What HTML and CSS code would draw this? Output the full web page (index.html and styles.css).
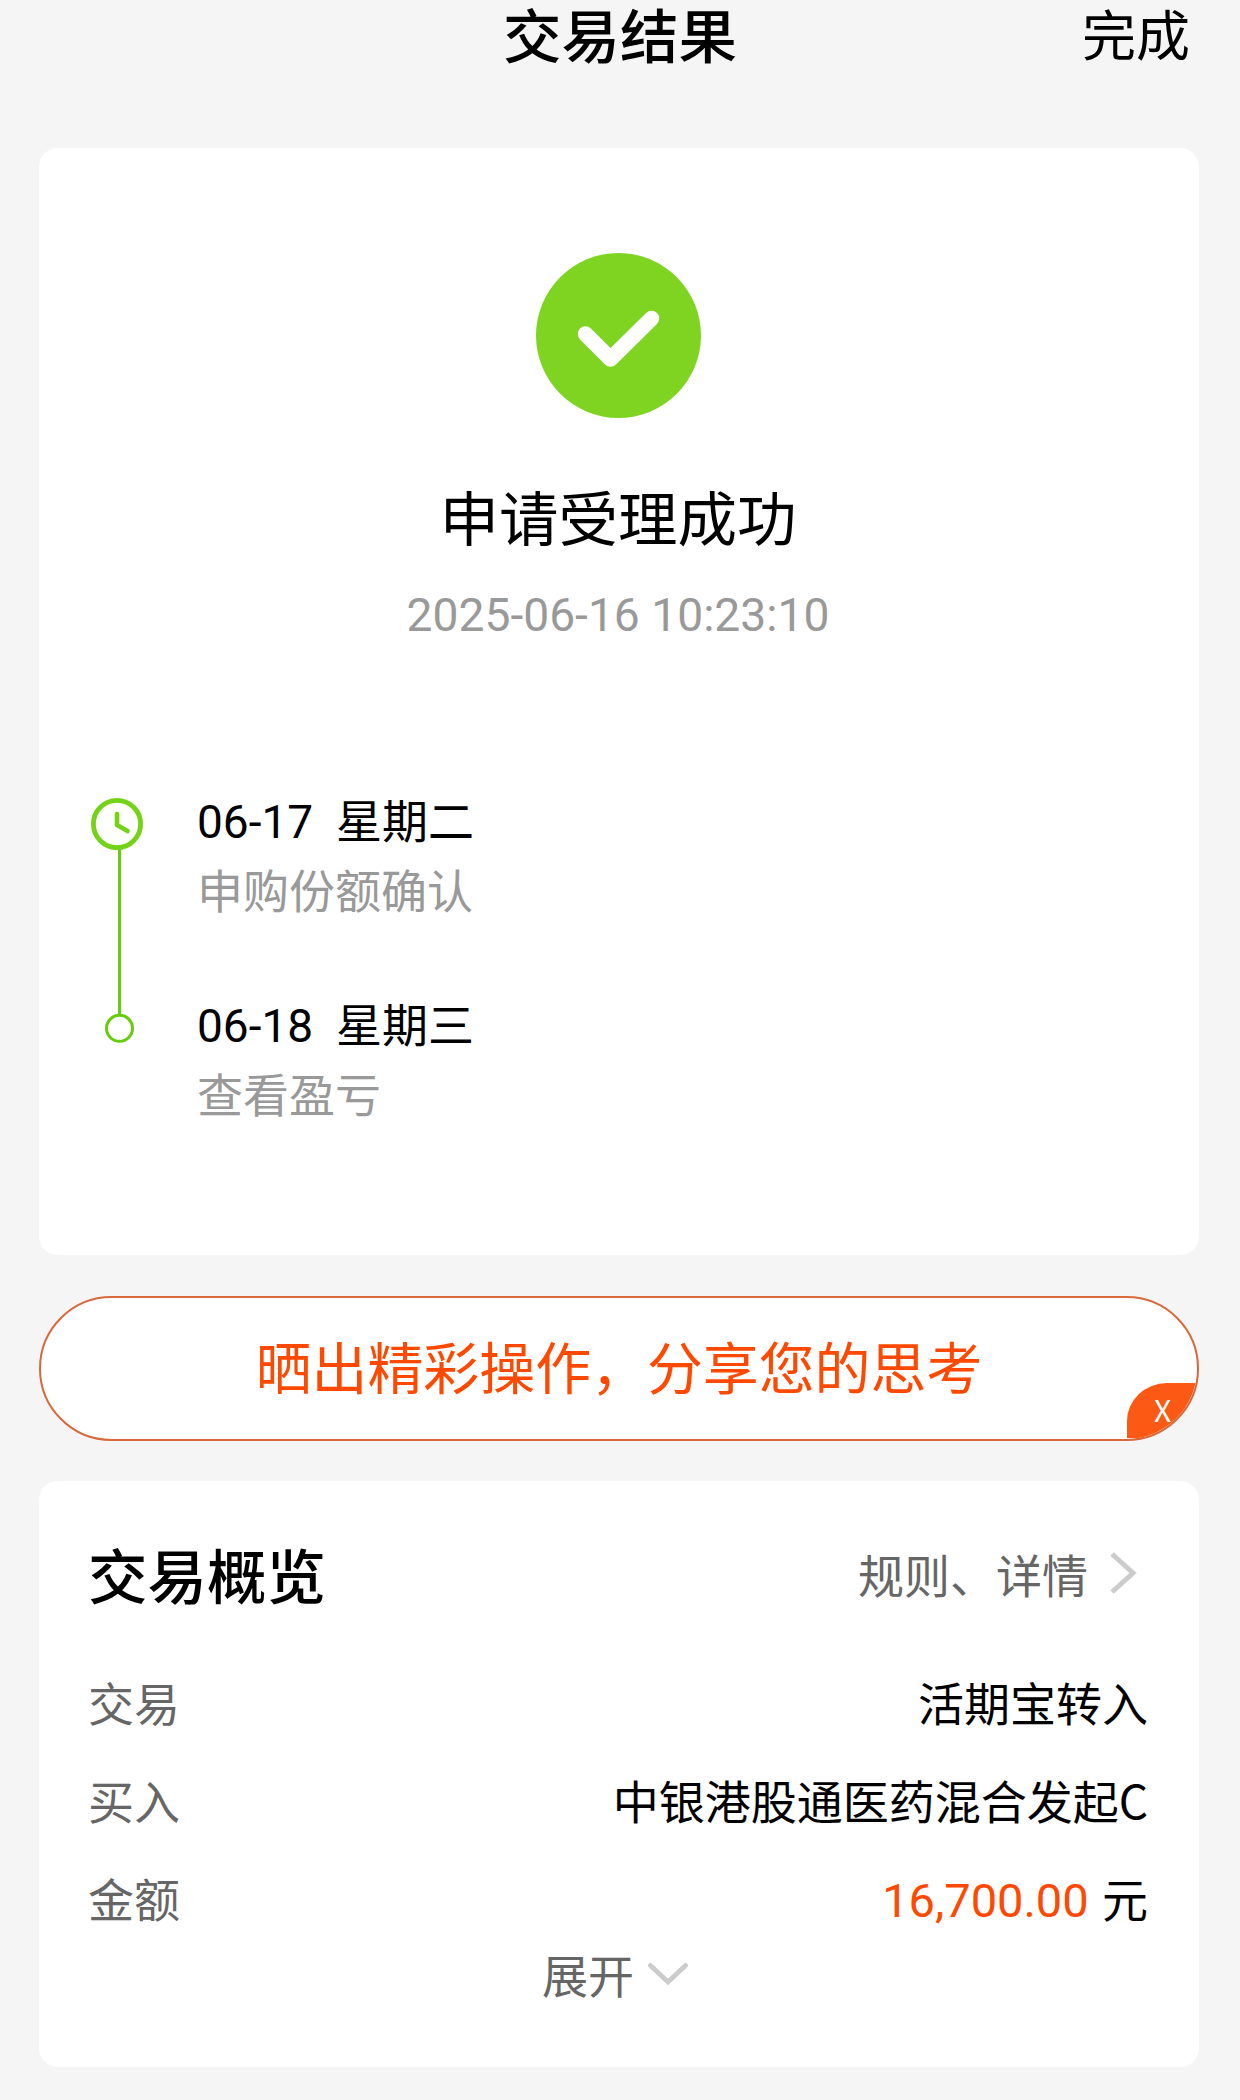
FILE: index.html
```html
<!DOCTYPE html>
<html lang="zh-CN">
<head>
    <meta charset="UTF-8">
    <title>交易结果</title>
    <link rel="stylesheet" href="styles.css">
</head>
<body>
    <div class="header">
        <h1>交易结果</h1>
        <a class="done">完成</a>
    </div>

    <div class="card result">
        <svg class="success-icon" viewBox="0 0 165 165">
            <circle cx="82.5" cy="82.5" r="82.5" fill="#7ed421"/>
            <path d="M49.5 81 L74.5 106 L115.5 65.5" fill="none" stroke="#fff" stroke-width="15.5" stroke-linecap="round" stroke-linejoin="round"/>
        </svg>
        <h2>申请受理成功</h2>
        <p class="time">2025-06-16 10:23:10</p>

        <div class="timeline">
            <svg class="track" viewBox="0 0 56 250">
                <path d="M30.5 52 V218" stroke="#66cc0d" stroke-width="3"/>
                <circle cx="28" cy="27" r="23.6" fill="#fff" stroke="#74d316" stroke-width="4.8"/>
                <path d="M28 17 V28 L38.5 34" fill="none" stroke="#74d316" stroke-width="4.6" stroke-linecap="round" stroke-linejoin="round"/>
                <circle cx="30.5" cy="231.3" r="13" fill="#fff" stroke="#66cc0d" stroke-width="3"/>
            </svg>
            <div class="steps">
                <div class="step">
                    <div class="date">06-17&nbsp; 星期二</div>
                    <div class="desc">申购份额确认</div>
                </div>
                <div class="step">
                    <div class="date">06-18&nbsp; 星期三</div>
                    <div class="desc">查看盈亏</div>
                </div>
            </div>
        </div>
    </div>

    <div class="share">
        <span>晒出精彩操作，分享您的思考</span>
        <div class="close">X</div>
    </div>

    <div class="card overview">
        <div class="overview-head">
            <h3>交易概览</h3>
            <a class="rules">规则、详情
                <svg class="arrow-right" viewBox="0 0 28 44">
                    <path d="M3 3 L24 22 L3 41" fill="none" stroke="#ccc" stroke-width="5"/>
                </svg>
            </a>
        </div>
        <div class="row">
            <span class="label">交易</span>
            <span class="value">活期宝转入</span>
        </div>
        <div class="row">
            <span class="label">买入</span>
            <span class="value">中银港股通医药混合发起C</span>
        </div>
        <div class="row">
            <span class="label">金额</span>
            <span class="value"><b class="amount">16,700.00</b> 元</span>
        </div>
        <div class="expand">展开
            <svg class="arrow-down" viewBox="0 0 40 24">
                <path d="M2.5 2.5 L20 19 L37.5 2.5" fill="none" stroke="#ccc" stroke-width="4.8" stroke-linecap="round"/>
            </svg>
        </div>
    </div>
</body>
</html>
```
FILE: styles.css
```css
* {
    box-sizing: border-box;
}

body {
    margin: 0;
    background: #f5f5f5;
    color: #000;
    font-family: Roboto, "Noto Sans CJK SC", sans-serif;
    font-size: 46px;
}

h1, h2, h3, p {
    margin: 0;
}

svg {
    display: block;
}

.header {
    display: grid;
    grid-template-columns: 1fr auto 1fr;
    align-items: center;
    height: 76px;
    padding: 0 50px;
    margin-bottom: 72px;
}

.header h1 {
    grid-column: 2;
    font-size: 58.5px;
    font-weight: 500;
    line-height: 76px;
}

.done {
    justify-self: end;
    font-size: 54px;
    line-height: 76px;
}

.card {
    margin: 0 41px 0 39px;
    background: #fff;
    border-radius: 19px;
}

.result {
    height: 1107px;
    padding: 105px 52px 0 50px;
}

.success-icon {
    width: 165px;
    height: 165px;
    margin: 0 auto;
}

.result h2 {
    margin-top: 67px;
    font-size: 59.5px;
    font-weight: 400;
    line-height: 72px;
    text-align: center;
}

.time {
    margin-top: 28px;
    color: #999;
    font-size: 46.2px;
    line-height: 60px;
    text-align: center;
}

.timeline {
    display: flex;
    margin-top: 142px;
}

.track {
    width: 56px;
    height: 250px;
    margin-top: 10px;
    flex: none;
}

.steps {
    margin-left: 52px;
}

.step {
    height: 204px;
    line-height: 70px;
}

.desc {
    color: #999;
}

.share {
    position: relative;
    display: flex;
    align-items: center;
    justify-content: center;
    height: 145px;
    margin: 41px 41px 40px 39px;
    padding-bottom: 8px;
    background: #fff;
    border: 2px solid #d9683a;
    border-radius: 73px;
    overflow: hidden;
    color: #ff4800;
    font-size: 55.9px;
}

.close {
    position: absolute;
    right: 0;
    bottom: 1px;
    width: 70px;
    height: 55px;
    padding-left: 27px;
    background: #fc5a14;
    border-top-left-radius: 40px 38px;
    color: #fff;
    font-family: "Noto Sans CJK SC", sans-serif;
    font-size: 30px;
    line-height: 53px;
}

.overview {
    height: 586px;
    padding: 50px 51px 0 49px;
}

.overview-head {
    display: flex;
    justify-content: space-between;
    align-items: center;
    height: 84px;
    margin-bottom: 37px;
}

.overview-head h3 {
    font-size: 59.5px;
    font-weight: 500;
}

.rules {
    display: flex;
    align-items: center;
    margin-right: 11px;
    color: #666;
}

.arrow-right {
    width: 28px;
    height: 44px;
    margin-left: 21px;
}

.row {
    display: flex;
    justify-content: space-between;
    height: 98px;
    line-height: 98px;
}

.label, .value {
    font-family: "Noto Sans CJK SC", sans-serif;
}

.label {
    color: #666;
}

.amount {
    margin-right: 3px;
    color: #ff4800;
    font-family: Roboto, sans-serif;
    font-size: 47px;
    font-weight: 400;
}

.expand {
    display: flex;
    align-items: center;
    justify-content: center;
    height: 54px;
    padding-right: 6px;
    color: #666;
}

.arrow-down {
    width: 40px;
    height: 24px;
    margin: 4px 0 0 14px;
}
```
